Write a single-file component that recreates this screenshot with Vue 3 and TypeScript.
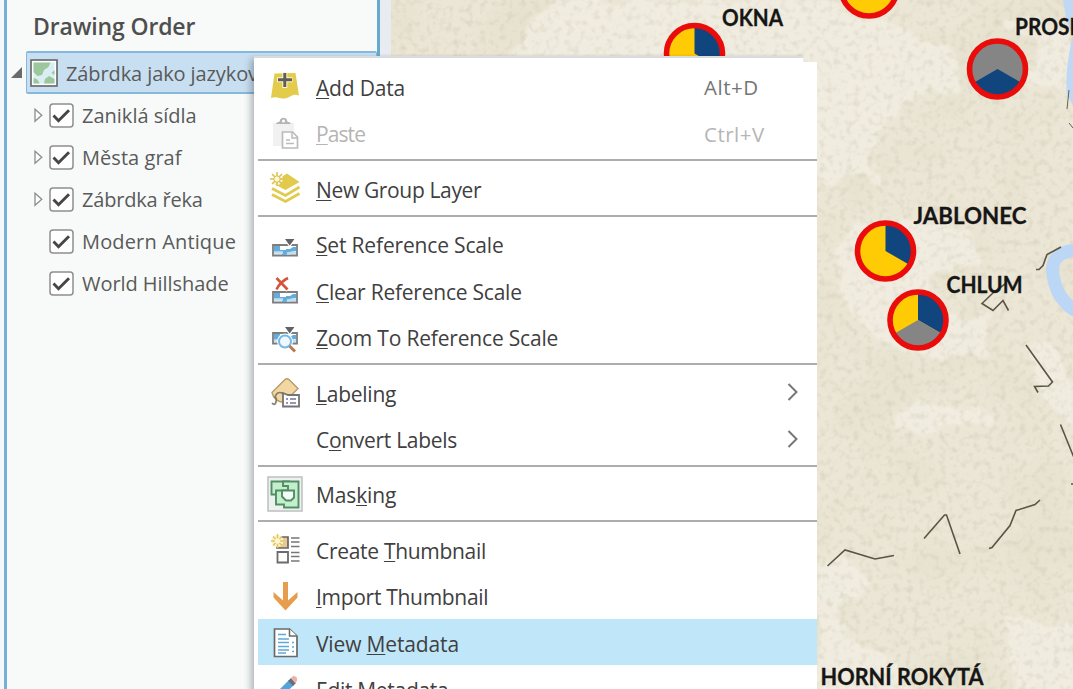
<script setup lang="ts">
interface Layer { name: string; expandable: boolean; spacing: number }
interface Item {
  kind: 'item'
  icon: string
  pre: string
  key: string
  post: string
  shortcut?: string
  spacing: number
  disabled?: boolean
  submenu?: boolean
  active?: boolean
}
interface Separator { kind: 'sep' }
type Entry = Item | Separator

const layers: Layer[] = [
  { name: 'Zaniklá sídla', expandable: true, spacing: 0 },
  { name: 'Města graf', expandable: true, spacing: 0.05 },
  { name: 'Zábrdka řeka', expandable: true, spacing: -0.2 },
  { name: 'Modern Antique', expandable: false, spacing: 0.15 },
  { name: 'World Hillshade', expandable: false, spacing: -0.05 },
]

const sep: Separator = { kind: 'sep' }
const entries: Entry[] = [
  { kind: 'item', icon: 'add', pre: '', key: 'A', post: 'dd Data', shortcut: 'Alt+D', spacing: -0.2 },
  { kind: 'item', icon: 'paste', pre: '', key: 'P', post: 'aste', shortcut: 'Ctrl+V', spacing: -0.9, disabled: true },
  sep,
  { kind: 'item', icon: 'group', pre: '', key: 'N', post: 'ew Group Layer', spacing: -0.35 },
  sep,
  { kind: 'item', icon: 'set', pre: '', key: 'S', post: 'et Reference Scale', spacing: -0.17 },
  { kind: 'item', icon: 'clear', pre: '', key: 'C', post: 'lear Reference Scale', spacing: -0.23 },
  { kind: 'item', icon: 'zoom', pre: '', key: 'Z', post: 'oom To Reference Scale', spacing: -0.18 },
  sep,
  { kind: 'item', icon: 'label', pre: '', key: 'L', post: 'abeling', spacing: -0.25, submenu: true },
  { kind: 'item', icon: '', pre: 'C', key: 'o', post: 'nvert Labels', spacing: -0.3, submenu: true },
  sep,
  { kind: 'item', icon: 'mask', pre: 'Mas', key: 'k', post: 'ing', spacing: -0.15 },
  sep,
  { kind: 'item', icon: 'create', pre: 'Create ', key: 'T', post: 'humbnail', spacing: -0.3 },
  { kind: 'item', icon: 'import', pre: '', key: 'I', post: 'mport Thumbnail', spacing: -0.3 },
  { kind: 'item', icon: 'view', pre: 'View ', key: 'M', post: 'etadata', spacing: -0.15, active: true },
  { kind: 'item', icon: 'edit', pre: 'E', key: 'd', post: 'it Metadata', spacing: -0.3 },
]

const towns = [
  { x: 694.5, y: 53.5, base: '#ffcb05', wedges: [{ d: 'M0 0V-27A27 27 0 0 1 23.4 13.5Z', c: '#11457e' }] },
  { x: 869, y: -12, base: '#ffcb05', wedges: [] },
  { x: 997.5, y: 69, base: '#858585', wedges: [{ d: 'M0 0L23.4 13.5A27 27 0 0 1-23.4 13.5Z', c: '#11457e' }] },
  { x: 885.5, y: 251, base: '#ffcb05', wedges: [{ d: 'M0 0V-27A27 27 0 0 1 23.4 13.5Z', c: '#11457e' }] },
  {
    x: 918, y: 320, base: '#ffcb05', wedges: [
      { d: 'M0 0V-27A27 27 0 0 1 23.4 13.5Z', c: '#11457e' },
      { d: 'M0 0L23.4 13.5A27 27 0 0 1-23.4 13.5Z', c: '#858585' },
    ],
  },
]
const names = [
  { x: 722, y: 25.5, w: 61, t: 'OKNA' },
  { x: 1015, y: 34.5, w: 80, t: 'PROSEČ' },
  { x: 913.5, y: 223.5, w: 113, t: 'JABLONEC' },
  { x: 946.5, y: 292.5, w: 76, t: 'CHLUM' },
  { x: 820.5, y: 685, w: 163, t: 'HORNÍ ROKYTÁ' },
]
</script>

<template>
  <div class="screen">
    <aside class="contents">
      <h1>Drawing Order</h1>
      <div class="root-row">
        <svg class="collapse" width="12" height="13" viewBox="0 0 12 13"><path d="M11 1v11H0z" fill="#6a6a6a" /></svg>
        <div class="root">
          <svg width="28" height="28" viewBox="0 0 28 28">
            <rect x="1" y="1" width="26" height="26" fill="#fff" stroke="#6d6d6d" stroke-width="1.7" />
            <rect x="3.5" y="3.5" width="21" height="21" fill="#d8eef3" />
            <path d="M3.500 3.500H20.500L18.500 8 14 11l-2 5-4.500 1-4-4zM3.500 19l4 1.500 2 4h-6zM24.500 11v5l-3-2zM15 20l4-3 5.500 3v4.500H14z" fill="#9cc69c" />
          </svg>
          <span>Zábrdka jako jazyková</span>
        </div>
      </div>
      <div v-for="l in layers" :key="l.name" class="layer">
        <svg class="expand" width="9" height="15" viewBox="0 0 9 15">
          <path v-if="l.expandable" d="M1 1.200V13.300L7.800 7.200z" fill="#fff" stroke="#8d8d8d" stroke-width="1.300" />
        </svg>
        <svg width="25" height="25" viewBox="0 0 25 25">
          <rect x="1" y="1" width="23" height="23" rx="3" fill="#fff" stroke="#8e8e8e" stroke-width="1.500" />
          <path d="M4.500 12.500l5 5.200L20 7.200" fill="none" stroke="#464646" stroke-width="2.900" />
        </svg>
        <span :style="{ letterSpacing: l.spacing + 'px' }">{{ l.name }}</span>
      </div>
    </aside>
    <div class="gutter"></div>
    <svg class="map" viewBox="391 0 682 689" width="682" height="689">
      <defs>
        <filter id="grain" x="0" y="0" width="100%" height="100%" color-interpolation-filters="sRGB">
          <feTurbulence type="fractalNoise" baseFrequency="0.15" numOctaves="2" seed="8" />
          <feColorMatrix values="0 0 0 0 .69  0 0 0 0 .66  0 0 0 0 .54  2.4 0 0 0 -1.15" />
        </filter>
        <filter id="clouds" x="0" y="0" width="100%" height="100%" color-interpolation-filters="sRGB">
          <feTurbulence type="fractalNoise" baseFrequency="0.012" numOctaves="3" seed="21" />
          <feColorMatrix values="0 0 0 0 .83  0 0 0 0 .80  0 0 0 0 .70  3 0 0 0 -1.400" />
        </filter>
        <filter id="soft" x="-5%" y="-5%" width="110%" height="110%">
          <feTurbulence type="fractalNoise" baseFrequency="0.04" numOctaves="3" seed="4" result="n" />
          <feDisplacementMap in="SourceGraphic" in2="n" scale="22" />
          <feGaussianBlur stdDeviation="1.500" />
        </filter>
      </defs>
      <rect x="391" width="682" height="689" fill="#ebe6d5" />
      <rect x="391" width="682" height="689" filter="url(#clouds)" opacity=".16" />
      <g fill="#f3efe4" opacity=".75" filter="url(#soft)">
        <path d="M560 0h280l-5 12 50 8 30 16 35 10 8 45 30-12 30 0 20-40-30-6-5-14 70 8v60l-40-2-80 5-30 2-50 40 4 50-30-10-20 15-30-50V62H500z" />
        <path d="M850 228l40-10 85 12 2 30-45 20-10 30 75 10-15 30-50 8-50-15-35-35-10-40z" />
        <path d="M817 568l32-7 20 20-30 25 5 28 50 25 20 40h-97z" />
        <path d="M1005 615l25 4 16 10 27-7v67h-60l-5-40z" />
        <path d="M895 415l25-14 22 8 55 2-5 10-45 4-20 16-35-16zM1030 350l20-8 23 45v40l-30-30z" />
      </g>
      <rect x="391" width="682" height="689" filter="url(#grain)" opacity=".24" />
      <path d="M1063 0q4 28 10 33V0zM1073 34q-9 40-6 60l6 12z" fill="#c0d8f3" />
      <path d="M1090 253c-22-7-41 2-37 22 4 26 20 37 37 42" fill="none" stroke="#bbd7f5" stroke-width="13" />
      <path d="M1069 90l-2 19m2 14l4 5" fill="none" stroke="#5b6557" />
      <g fill="none" stroke="#5c5344" stroke-width="1.600">
        <path d="M1036 269.500h3l4-4 4-11 14-7.500" />
        <path d="M1005 284l-11 8-12 11.500 11 7 10-10 5.500 10" />
        <path d="M1026 345l26.500 37-4 4-14 .5 3.500 6M1060.500 424.500l13 32" />
        <path d="M827.500 566l17.500-16 30 9 19-3.500M924 538.500l20.500-23.500h2l13.500 39M989 548.500l3-1 18-22 6-15 19-6 5-4.500M1071 484h2" />
      </g>
      <g v-for="(t, i) in towns" :key="i" :transform="`translate(${t.x} ${t.y})`">
        <circle r="27" :fill="t.base" />
        <path v-for="w in t.wedges" :key="w.d" :d="w.d" :fill="w.c" />
        <circle r="28" fill="none" stroke="#ea0b0b" stroke-width="5.600" />
      </g>
      <text v-for="n in names" :key="n.t" :x="n.x" :y="n.y" :textLength="n.w" lengthAdjust="spacingAndGlyphs">{{ n.t }}</text>
    </svg>

    <nav class="menu">
      <template v-for="(e, i) in entries" :key="i">
        <div v-if="e.kind === 'sep'" class="sep"></div>
        <div v-else class="item" :class="{ disabled: e.disabled, active: e.active }">
          <svg class="icon" width="36" height="36" viewBox="0 0 36 36">
            <g v-if="e.icon === 'add'">
              <path d="M7.500 5.500l21-.5 3.500 22.500c-7-3-10 4-17 3-5-1-7-2-11-.5z" fill="#e3cc4c" />
              <path d="M17.800 4v16M10 11.700h15.500" stroke="#fff6c9" stroke-width="5" />
              <path d="M17.800 5v14M11 11.700h14" stroke="#5d5d5d" stroke-width="3" />
            </g>
            <g v-else-if="e.icon === 'paste'" fill="none">
              <path d="M6 8h21v23H6z" fill="#f1f1f1" />
              <path d="M9 9c1-3 4-1 4-4 1-3 6-3 7 0 0 3 3 1 4 4z" fill="#b5b5b5" />
              <circle cx="16.500" cy="6" r="1.500" fill="#fff" />
              <path d="M15.500 17h10l5 5v11h-15z" fill="#fff" stroke="#bbb" stroke-width="1.700" />
              <path d="M25 17v6h6M19 25h4M19 28.500h8" stroke="#bbb" stroke-width="1.500" />
            </g>
            <g v-else-if="e.icon === 'group'">
              <path d="M8 11L20 3.500 32.500 12 18.500 20 5 13z" fill="#e1ca4c" />
              <path d="M5 18.500l13.500 7L32.500 17M5 24.500l13.500 7 14-8" fill="none" stroke="#e1ca4c" stroke-width="2.800" />
              <circle cx="10" cy="9" r="6" fill="#fff" opacity=".75" />
              <path d="M10 2v14M3 9h14M5 4l10 10M15 4L5 14" stroke="#d9c04a" stroke-width="1.500" />
              <circle cx="10" cy="9" r="3.200" fill="#fff9dc" stroke="#d9be3e" />
            </g>
            <g v-else-if="e.icon === 'set' || e.icon === 'clear' || e.icon === 'zoom'">
              <g :transform="e.icon === 'zoom' ? 'translate(0 -5)' : e.icon === 'clear' ? 'translate(0 1)' : ''">
                <path d="M6 19h24v10.500H6z" fill="#fff" stroke="#7d7d7d" stroke-width="1.800" />
                <path d="M7 20h6v4h6v-1h4l3-2h3v4l-6 1-4 3h-4v-3H7z" fill="#63addd" />
                <path d="M7 26.500h9M20 27.500l9-1" fill="none" stroke="#bfdef3" stroke-width="2.500" />
                <path v-if="e.icon !== 'clear'" d="M17 12.500h11.500L22.700 20.500z" fill="#626262" stroke="#fff" stroke-width="1.200" />
              </g>
              <path v-if="e.icon === 'clear'" d="M8 5l13 13M21 5Q13 9 8.500 18" stroke="#fff" stroke-width="5" fill="none" />
              <path v-if="e.icon === 'clear'" d="M9.500 6l11 11.500M21 6Q13 10 9.500 17.500" stroke="#d5553a" stroke-width="2.600" fill="none" />
              <g v-if="e.icon === 'zoom'">
                <circle cx="18" cy="22.500" r="8" fill="#fff" />
                <circle cx="18" cy="22.500" r="6" fill="#eef8ff" stroke="#76b8e4" stroke-width="2" />
                <path d="M22.500 27l5.500 5.500" stroke="#b77a50" stroke-width="3" />
              </g>
            </g>
            <g v-else-if="e.icon === 'label'">
              <path d="M5 18.500L18 5.500q2-1.500 4 0l9 9-14 14q-10-1-12-10z" fill="#f2d7a2" stroke="#b79a69" stroke-width="1.400" />
              <path d="M5 29q3 3 4-1t-1-5q2-6 7-4t2 5" fill="none" stroke="#837a6c" stroke-width="1.700" />
              <path d="M16 19l5 2h11v11.500H16z" fill="#fff" stroke="#747474" stroke-width="1.800" />
              <path d="M19 25h2m2 0h6M19 29h2m2 0h6" stroke="#77719d" stroke-width="1.500" />
            </g>
            <g v-else-if="e.icon === 'mask'" fill="#c4efcc" stroke="#528d66" stroke-width="1.900">
              <rect x="1" y="1" width="34" height="34" fill="#eef1ef" stroke="#bcc0be" stroke-width="1.500" />
              <path d="M4.500 5.500H22v5h4v6H10v2H4.500z" />
              <path d="M16 5.500h15.500v26H17v-3H9V14.500h12V10h-5z" />
              <path d="M15 14.500h12v7l-3 3h-5l-4-4z" fill="#f6faf6" />
            </g>
            <g v-else-if="e.icon === 'create'">
              <path d="M10 6h11v11H10z" fill="#e8c991" stroke="#666" stroke-width="1.700" />
              <circle cx="10.500" cy="10" r="6" fill="#fff3c4" />
              <path d="M10.500 3v14M4 10h13M6 5.500l9 9M15 5.500l-9 9" stroke="#dfc565" stroke-width="1.500" />
              <circle cx="10.500" cy="10" r="2.700" fill="#fff6d6" />
              <path d="M10.500 21h10.500v10.500H10.500z" fill="#fff" stroke="#6b6b6b" stroke-width="1.800" />
              <path d="M24 7h8.500M24 11h8.500M24 15.500h8.500M24 21.500h8.500M24 25.500h8.500M24 30h8.500" stroke="#777" stroke-width="1.500" />
            </g>
            <g v-else-if="e.icon === 'import'">
              <path d="M16 4h5v18.500l9.500-8.500v5.500L18.500 32.500 6.500 19.500V14l9.500 8.500z" fill="#e69d4e" />
            </g>
            <g v-else-if="e.icon === 'view'">
              <path d="M7.500 5h15l7.500 7v20.500H7.500z" fill="#fff" stroke="#696969" stroke-width="1.700" />
              <path d="M22.500 5v7H30" fill="#fff" stroke="#696969" stroke-width="1.500" />
              <path d="M11 10.500h8M11 15h11M11 18.500h11M11 22.500h11M11 26h11M11 29h8" stroke="#5da9d8" stroke-width="1.600" />
              <path d="M25 18.500h2M25 23h2M25 27.500h2" stroke="#5da9d8" stroke-width="1.700" />
            </g>
            <g v-else-if="e.icon === 'edit'">
              <path d="M4 32l3-8L22 9l5 5-16 15z" fill="#55a3dc" />
              <path d="M21 10l3-3 5 5-3 3z" fill="#67717b" /><path d="M24 7l2-2q5 0 4 5l-2 2z" fill="#efb1a0" />
            </g>
          </svg>
          <span class="label" :style="{ letterSpacing: e.spacing + 'px' }">{{ e.pre }}<u>{{ e.key }}</u>{{ e.post }}</span>
          <span v-if="e.shortcut" class="shortcut">{{ e.shortcut }}</span>
          <svg v-if="e.submenu" class="arrow" width="12" height="20" viewBox="0 0 12 20"><path d="M1.500 2l8 8-8 8" fill="none" stroke="#777" stroke-width="2" /></svg>
        </div>
      </template>
    </nav>
    <div class="menu-edge"></div>
  </div>
</template>

<style>
body { margin: 0; overflow: hidden; }
</style>

<style scoped>
.screen { position: relative; display: flex; width: 1073px; height: 689px; overflow: hidden; font-family: "Open Sans", "Noto Sans", sans-serif; background: #f5f8f9; }
.contents { box-sizing: border-box; flex: none; width: 376px; height: 689px; margin-left: 4px; border-left: 3px solid #78b0d3; border-right: 3px solid #66a8d0; background: #f7faf9; color: #5a5a5a; }
h1 { margin: 0; height: 51px; padding: 9px 0 0 26px; box-sizing: border-box; font-size: 23px; line-height: 34px; font-weight: 600; letter-spacing: -.15px; color: #4f4f4f; white-space: nowrap; }
.root-row { display: flex; align-items: center; height: 43px; padding-left: 4px; }
.collapse { flex: none; margin-right: 3px; }
.root { flex: 1; display: flex; align-items: center; gap: 8px; box-sizing: border-box; height: 43px; padding-left: 3px; border: 2px solid #86b8db; border-width: 2px 1px; border-radius: 2px; background: #c7dff0; font-size: 20px; letter-spacing: -.1px; white-space: nowrap; overflow: hidden; }
.root span { padding-top: 2px; }
.layer { display: flex; align-items: center; height: 42px; padding-left: 27px; font-size: 20px; }
.expand { margin-right: 5.500px; }
.layer span { margin-left: 8.500px; }
.gutter { flex: none; width: 11px; background: #e8ebf0; }
.map { flex: none; display: block; }
.map text { font-family: Lato, "Open Sans", sans-serif; font-weight: 700; font-size: 22px; fill: #161616; stroke: #161616; stroke-width: .3px; }
.menu { position: absolute; left: 254px; top: 57px; width: 563px; height: 640px; box-sizing: border-box; padding: 6.300px 0 0 4px; background: #fff; box-shadow: -3px 2px 7px rgba(40, 45, 60, .35); clip-path: polygon(-14px -3px, 549px -3px, 549px 5px, 563px 5px, 563px 640px, -14px 640px); }
.menu-edge { position: absolute; left: 254px; top: 56px; width: 549px; height: 2px; background: #d9dcde; }
.item { display: flex; align-items: center; height: 46.400px; color: #404040; font-size: 21px; }
.sep { height: 9.100px; background: linear-gradient(#adadad, #adadad) 0 3px / 100% 2px no-repeat; }
.icon { flex: none; margin-left: 9px; }
.label { margin-left: 13px; padding-top: 3px; white-space: nowrap; }
.label u { text-decoration-thickness: 1px; text-underline-offset: 2px; }
.shortcut { margin-left: auto; width: 113px; padding-top: 2px; font-size: 20.500px; letter-spacing: .5px; color: #747474; }
.arrow { margin-left: auto; margin-right: 18px; }
.active { background: #c0e6fa; }
.disabled, .disabled .shortcut { color: #b5b5b5; }
</style>
